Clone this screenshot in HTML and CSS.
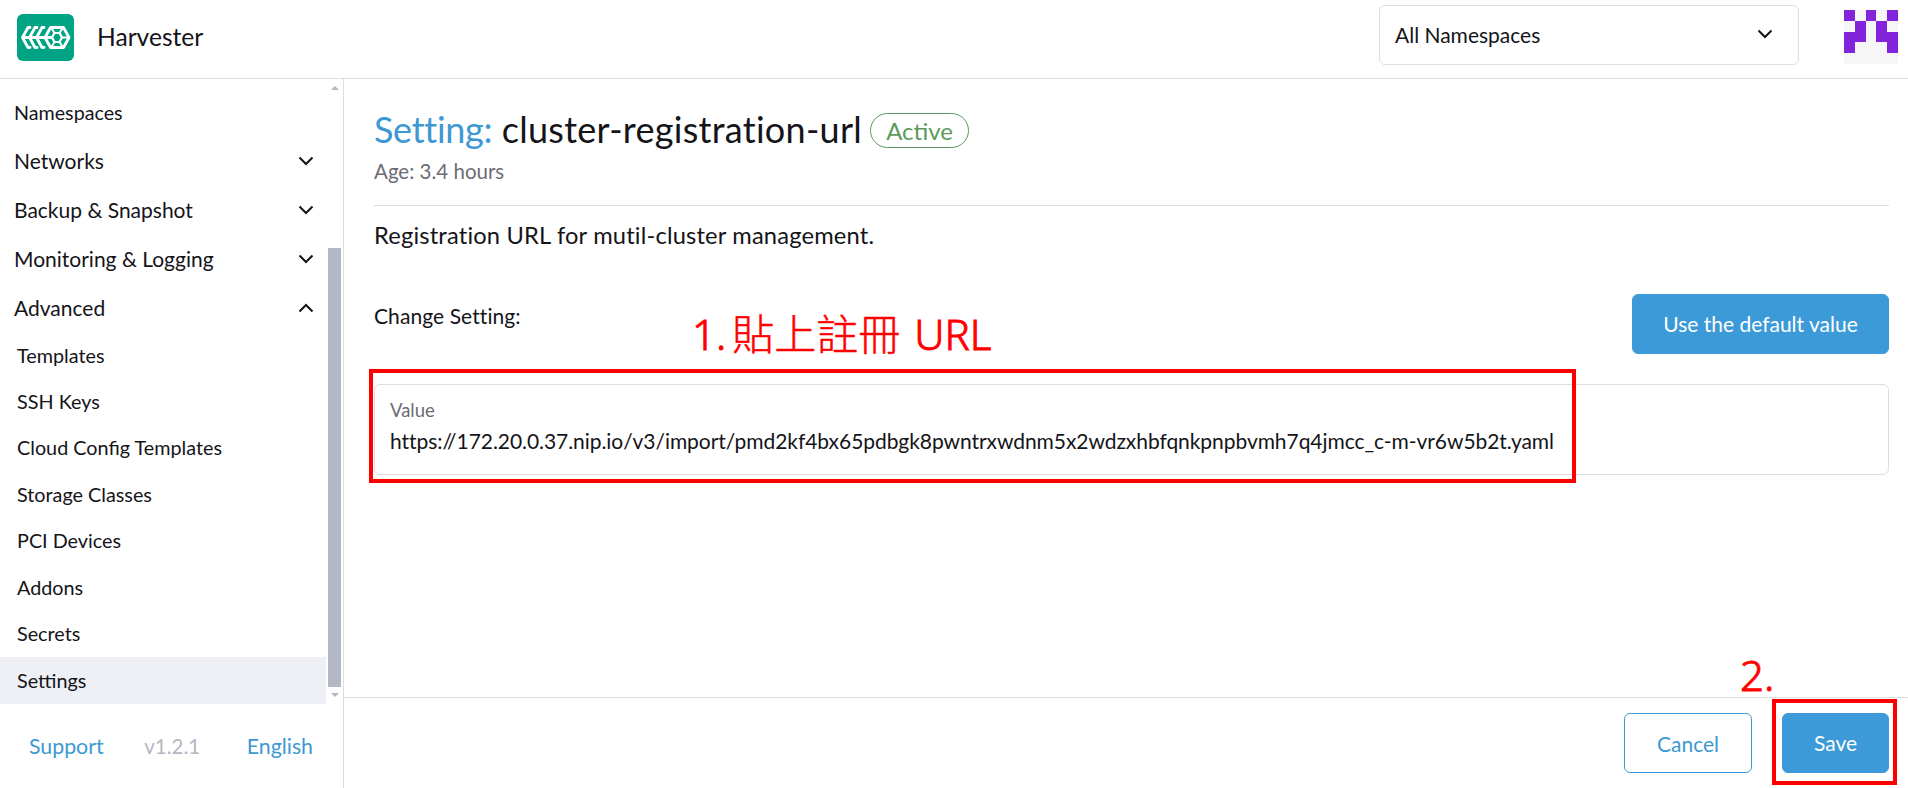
FILE: index.html
```html
<!DOCTYPE html>
<html lang="en">
<head>
<meta charset="UTF-8">
<meta name="viewport" content="width=device-width, initial-scale=1.0">
<title>Harvester</title>
<link rel="stylesheet" href="styles.css">
</head>
<body>
<header class="header">
  <svg class="logo" viewBox="0 0 57 47">
    <rect width="57" height="47" rx="6" fill="#00a383"/>
    <g fill="none" stroke="#fff" stroke-width="2.8" stroke-linejoin="round" stroke-linecap="round">
      <path d="M13 13.500h-2L5.500 23.500 11 33.500h2M20 13.500h-2L12.500 23.500 18 33.500h2M27 13.500h-2L19.500 23.500 25 33.500h2M5.500 23.500h29"/>
      <path d="M33.500 13.500h13l5.500 10-5.500 10h-13L28 23.500z"/>
      <path d="M37.500 19h5l2.500 4.500-2.500 4.500h-5L35 23.500z" stroke-width="2.200"/>
      <path d="M34 13.500l3.500 5.500M46 13.500 42.500 19M34 33.500l3.500-5.500M46 33.500 42.500 28M45 23.500h6" stroke-width="2"/>
    </g>
  </svg>
  <h1 class="product">Harvester</h1>
  <div class="ns-select">
    <span>All Namespaces</span>
    <svg class="chevron" viewBox="0 0 16 10"><path d="M1.500 1.500 8 8l6.500-6.500"/></svg>
  </div>
  <svg class="avatar" viewBox="0 0 5 5" shape-rendering="crispEdges">
    <rect width="5" height="5" fill="#f6f6f6"/>
    <path fill="#8224dc" d="M0 0h1v1H0zM2 0h1v1H2zM4 0h1v1H4zM1 1h1v2H1zM3 1h1v2H3zM0 2h1v2H0zM4 2h1v2H4z"/>
  </svg>
</header>

<div class="page">
  <aside class="sidebar">
    <div class="nav-wrap">
      <nav class="nav">
        <a class="group small">Namespaces</a>
        <a class="group">Networks <svg class="chevron" viewBox="0 0 16 10"><path d="M1.500 1.500 8 8l6.500-6.500"/></svg></a>
        <a class="group">Backup &amp; Snapshot <svg class="chevron" viewBox="0 0 16 10"><path d="M1.500 1.500 8 8l6.500-6.500"/></svg></a>
        <a class="group">Monitoring &amp; Logging <svg class="chevron" viewBox="0 0 16 10"><path d="M1.500 1.500 8 8l6.500-6.500"/></svg></a>
        <a class="group">Advanced <svg class="chevron" viewBox="0 0 16 10"><path d="M1.500 8.500 8 2l6.500 6.500"/></svg></a>
        <a class="item">Templates</a>
        <a class="item">SSH Keys</a>
        <a class="item">Cloud Config Templates</a>
        <a class="item">Storage Classes</a>
        <a class="item">PCI Devices</a>
        <a class="item">Addons</a>
        <a class="item">Secrets</a>
        <a class="item active">Settings</a>
      </nav>
      <div class="scrollbar">
        <i class="arrow up"></i>
        <div class="thumb"></div>
        <i class="arrow down"></i>
      </div>
    </div>
    <div class="side-footer">
      <a>Support</a>
      <span class="version">v1.2.1</span>
      <a>English</a>
    </div>
  </aside>

  <main class="main">
    <div class="content">
      <div class="title-row">
        <h2 class="title"><span class="link">Setting:</span> cluster-registration-url</h2>
        <span class="badge">Active</span>
      </div>
      <div class="age">Age: 3.4 hours</div>
      <p class="description">Registration URL for mutil-cluster management.</p>
      <div class="change-row">
        <span class="change-label">Change Setting:</span>
        <button class="btn primary default-btn">Use the default value</button>
      </div>
      <div class="field">
        <label class="field-label">Value</label>
        <div class="field-value">https://172.20.0.37.nip.io/v3/import/pmd2kf4bx65pdbgk8pwntrxwdnm5x2wdzxhbfqnkpnpbvmh7q4jmcc_c-m-vr6w5b2t.yaml</div>
      </div>
    </div>
    <footer class="actions">
      <button class="btn secondary">Cancel</button>
      <button class="btn primary save-btn">Save</button>
    </footer>
  </main>
</div>

<!-- step markers over the page -->
<div class="mark mark-value"></div>
<div class="mark mark-save"></div>
<div class="note note-value"><span>1.</span><span class="cjk">貼上註冊</span><span>URL</span></div>
<div class="note note-save">2.</div>
</body>
</html>
```
FILE: styles.css
```css
* {box-sizing: border-box;}
body {
  margin: 0;
  height: 788px;
  display: flex;
  flex-direction: column;
  overflow: hidden;
  background: #fff;
  color: #141419;
  font-family: Lato, "Liberation Sans", sans-serif;
  font-size: 21px;
  white-space: nowrap;
}
h1, h2, p {margin: 0; font-weight: 400;}

.header {
  height: 79px;
  flex: none;
  display: flex;
  align-items: flex-start;
  padding-left: 17px;
  padding-right: 10px;
  border-bottom: 1px solid #dcdee0;
}
.logo {width: 57px; height: 47px; margin-top: 14px;}
.product {font-size: 24.6px; line-height: 30px; margin: 22px 0 0 23px;}
.ns-select {
  width: 420px;
  height: 60px;
  margin: 5px 45px 0 auto;
  padding: 0 25px 2px 15px;
  display: flex;
  align-items: center;
  justify-content: space-between;
  border: 1px solid #dcdee0;
  border-radius: 6px;
}
.avatar {width: 54px; height: 54px; margin-top: 10px;}
.chevron {
  width: 16px;
  height: 10px;
  fill: none;
  stroke: #141419;
  stroke-width: 2;
}

.page {flex: 1; display: flex; min-height: 0;}
.sidebar {
  width: 344px;
  flex: none;
  display: flex;
  flex-direction: column;
  border-right: 1px solid #dcdee0;
}
.nav-wrap {height: 625px; display: flex; justify-content: space-between;}
.nav {width: 326px; padding-top: 9px;}
.group {
  height: 49px;
  display: flex;
  align-items: center;
  justify-content: space-between;
  padding: 0 12px 0 14px;
}
.group.small {height: 48px; font-size: 19.700px;}
.item {
  height: 46.4px;
  display: flex;
  align-items: center;
  padding: 0 0 1px 17px;
  font-size: 19.800px;
}
.item.active {height: 47px; background: #eef0f6;}
.scrollbar {
  width: 13px;
  margin-right: 2px;
  height: 619px;
  display: flex;
  flex-direction: column;
  align-items: center;
  padding-top: 7px;
}
.arrow {border: 4px solid transparent; border-top-width: 0; border-bottom: 4px solid #b6b8c4;}
.arrow.down {border-top: 4px solid #b6b8c4; border-bottom-width: 0;}
.thumb {width: 13px; height: 439px; margin: 158px 0 6px; background: #b4b7c5;}
.side-footer {
  display: flex;
  justify-content: space-between;
  padding: 29px 30px 0 29px;
  line-height: 26px;
  font-size: 21.300px;
  color: #3d98d3;
}
.version {font-size: 20.500px; color: #b6b6c2; margin-right: 6px;}

.main {flex: 1; display: flex; flex-direction: column; min-width: 0;}
.content {flex: 1; padding: 25px 19px 0 30px;}
.title-row {display: flex; align-items: center; height: 52px;}
.title {
  font-size: 36px;
  line-height: 50px;
  padding-bottom: 2px;
  letter-spacing: 0.28px;
  font-variant-ligatures: none;
}
.link {color: #3d98d3; letter-spacing: -0.3px;}
.badge {
  width: 99px;
  height: 35px;
  margin-left: 8px;
  line-height: 34px;
  text-align: center;
  font-size: 24px;
  color: #5d995d;
  border: 1px solid #5d995d;
  border-radius: 18px;
}
.age {
  height: 50px;
  padding-top: 3px;
  line-height: 24px;
  font-size: 20.500px;
  color: #6c6c76;
  border-bottom: 1px solid #dcdee0;
}
.description {
  margin-top: 15px;
  line-height: 29px;
  font-size: 23.700px;
  letter-spacing: 0.17px;
  font-variant-ligatures: none;
}
.change-row {
  display: flex;
  align-items: flex-start;
  justify-content: space-between;
  margin-top: 44px;
}
.change-label {
  line-height: 26px;
  margin-top: 9px;
  letter-spacing: 0.08px;
  font-variant-ligatures: none;
}
.btn {
  height: 60px;
  padding: 0 0 2px;
  border: 1px solid #3b9ad7;
  border-radius: 6px;
  font-family: inherit;
  font-size: 21px;
}
.primary {background: #3b9ad7; color: #fff;}
.secondary {width: 128px; padding: 0; background: #fff; color: #3d98d3;}
.default-btn {width: 257px;}
.save-btn {width: 107px;}
.field {
  height: 91px;
  margin-top: 30px;
  padding: 14px 15px;
  border: 1px solid #dcdee0;
  border-radius: 6px;
}
.field-label {display: block; font-size: 18.500px; line-height: 22px; color: #6c6c76;}
.field-value {
  font-size: 21px;
  line-height: 28px;
  margin-top: 6px;
  letter-spacing: -0.06px;
  font-variant-ligatures: none;
}
.actions {
  height: 91px;
  display: flex;
  justify-content: flex-end;
  gap: 30px;
  padding: 15px 19px 0 0;
  border-top: 1px solid #dcdee0;
}

.mark {position: absolute; border: 4px solid #f00;}
.mark-value {left: 369px; top: 369px; width: 1207px; height: 114px;}
.mark-save {left: 1772px; top: 699px; width: 125px; height: 86px;}
.note {
  position: absolute;
  display: flex;
  align-items: baseline;
  color: #f00;
  font-family: "Noto Sans", sans-serif;
  font-weight: 300;
  font-size: 42px;
  line-height: 50px;
  -webkit-text-stroke: 0.9px #f00;
}
.note .cjk {
  font-family: "Noto Sans CJK TC", sans-serif;
  margin: 0 14px 0 6px;
  -webkit-text-stroke-width: 0.5px;
}
.note-value {left: 692px; top: 307px;}
.note-save {left: 1740px; top: 650px;}
```
